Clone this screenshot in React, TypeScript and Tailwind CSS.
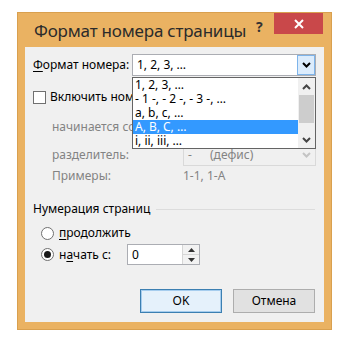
import React from "react";

const F = { fontFamily: '"Noto Sans", "Segoe UI", sans-serif' };

function Chevron({ color = "#000" }: { color?: string }) {
  return (
    <svg width="9" height="6" viewBox="0 0 9 6">
      <path d="M1 1 L4.5 4.5 L8 1" stroke={color} strokeWidth="2" fill="none" />
    </svg>
  );
}

function ChevronUp({ color = "#444" }: { color?: string }) {
  return (
    <svg width="9" height="6" viewBox="0 0 9 6">
      <path d="M1 5 L4.5 1.5 L8 5" stroke={color} strokeWidth="2" fill="none" />
    </svg>
  );
}

export default function App() {
  return (
    <div className="w-[346px] h-[344px] bg-white pt-[12px] pl-[17px] text-[12px] text-black" style={F}>
      <div className="w-[315px] h-[318px] bg-[#eab262] border border-[#d9a04f] flex flex-col">
        {/* title bar */}
        <div className="h-[34px] flex items-start relative">
          <div className="pl-[16px] pt-[7px] text-[17px] leading-[22px] text-[#2b2b2b] tracking-[-0.2px]">Формат номера страницы</div>
          <div className="absolute left-[238px] top-[3px] text-[14px] font-bold text-[#333]">?</div>
          <div className="absolute left-[256px] top-0 w-[49px] h-[21px] bg-[#c9484a] flex items-center justify-center">
            <svg width="10" height="10" viewBox="0 0 10 10">
              <path d="M1 1 L9 9 M9 1 L1 9" stroke="#fff" strokeWidth="2" />
            </svg>
          </div>
        </div>
        {/* client */}
        <div className="mx-[7px] h-[275px] bg-[#f0f0f0] relative flex flex-col px-[8px]">
          {/* row 1 */}
          <div className="mt-[7px] h-[22px] flex items-center">
            <div className="w-[99px]"><span className="underline underline-offset-2">Ф</span>ормат номера:</div>
            <div className="w-[184px] h-[22px] bg-white border border-[#abadb3] flex items-center">
              <div className="flex-1 pl-[4px]">1, 2, 3, …</div>
              <div className="w-[18px] h-[20px] bg-[#dcecfc] border border-[#7eb4ea] flex items-center justify-center">
                <Chevron />
              </div>
            </div>
          </div>
          {/* row 2 checkbox */}
          <div className="mt-[14px] h-[14px] flex items-center">
            <div className="w-[13px] h-[13px] bg-white border border-[#707070]" />
            <div className="ml-[4px] w-[82px] overflow-hidden whitespace-nowrap">Включить номер главы</div>
          </div>
          {/* row 3 */}
          <div className="mt-[12px] h-[22px] flex items-center text-[#838383]">
            <div className="pl-[19px] w-[99px] overflow-hidden whitespace-nowrap">начинается со стилем:</div>
            <div className="ml-[51px] w-[133px] h-[22px] border border-[#d9d9d9] bg-[#f0f0f0]" />
          </div>
          {/* row 4 separator */}
          <div className="mt-[6px] h-[22px] flex items-center text-[#838383]">
            <div className="pl-[19px] w-[150px]">разделитель:</div>
            <div className="w-[133px] h-[22px] border border-[#d9d9d9] bg-[#f0f0f0] flex items-center">
              <div className="flex-1 pl-[4px] flex"><span className="w-[22px]">-</span><span>(дефис)</span></div>
              <div className="w-[18px] h-[20px] flex items-center justify-center">
                <Chevron color="#c4c4c4" />
              </div>
            </div>
          </div>
          {/* row 5 */}
          <div className="mt-[2px] h-[16px] flex items-center text-[#838383]">
            <div className="pl-[19px] w-[150px]">Примеры:</div>
            <div>1-1, 1-A</div>
          </div>
          {/* row 6 group header */}
          <div className="mt-[17px] h-[16px] flex items-center">
            <div>Нумерация страниц</div>
            <div className="flex-1 ml-[6px] h-px bg-[#dcdcdc] mr-[1px]" />
          </div>
          {/* row 7 */}
          <div className="mt-[8px] h-[16px] flex items-center pl-[8px]">
            <div className="w-[13px] h-[13px] rounded-full bg-white border border-[#707070]" />
            <div className="ml-[5px]"><span className="underline underline-offset-2">п</span>родолжить</div>
          </div>
          {/* row 8 */}
          <div className="mt-[3px] h-[21px] flex items-center pl-[8px]">
            <div className="w-[13px] h-[13px] rounded-full bg-white border border-[#707070] flex items-center justify-center">
              <div className="w-[7px] h-[7px] rounded-full bg-[#1a1a1a]" />
            </div>
            <div className="ml-[5px] w-[68px]">н<span className="underline underline-offset-2">а</span>чать с:</div>
            <div className="w-[73px] h-[21px] bg-white border border-[#abadb3] flex items-center">
              <div className="flex-1 pl-[4px]">0</div>
              <div className="w-[17px] h-[19px] flex flex-col border-l border-[#d6d6d6]">
                <div className="flex-1 flex items-center justify-center bg-[#f2f2f2] border-b border-[#d6d6d6]">
                  <svg width="7" height="4" viewBox="0 0 7 4"><path d="M0 4 L3.5 0 L7 4Z" fill="#333" /></svg>
                </div>
                <div className="flex-1 flex items-center justify-center bg-[#f2f2f2]">
                  <svg width="7" height="4" viewBox="0 0 7 4"><path d="M0 0 L3.5 4 L7 0Z" fill="#333" /></svg>
                </div>
              </div>
            </div>
          </div>
          {/* buttons */}
          <div className="mt-[24px] flex justify-end gap-[11px] pr-[1px]">
            <div className="w-[82px] h-[24px] border border-[#3c7fb1] bg-[#e5f1fb] flex items-center justify-center shadow-[inset_0_0_0_1px_#a6cdee]">OK</div>
            <div className="w-[82px] h-[24px] border border-[#adadad] bg-[#e1e1e1] flex items-center justify-center">Отмена</div>
          </div>

          {/* dropdown list overlay */}
          <div className="absolute left-[107px] top-[30px] w-[184px] h-[72px] bg-white border border-[#646464] flex">
            <div className="flex-1 flex flex-col">
              <div className="h-[14px] leading-[14px] pl-[2px]">1, 2, 3, …</div>
              <div className="h-[14px] leading-[14px] pl-[2px]">- 1 -, - 2 -, - 3 -, …</div>
              <div className="h-[14px] leading-[14px] pl-[2px]">a, b, c, …</div>
              <div className="h-[14px] leading-[14px] pl-[2px] bg-[#3399ff] text-white">A, B, C, …</div>
              <div className="h-[14px] leading-[14px] pl-[2px]">i, ii, iii, …</div>
            </div>
            <div className="w-[17px] bg-[#f0f0f0] flex flex-col items-center">
              <div className="h-[17px] flex items-center justify-center"><ChevronUp /></div>
              <div className="w-[15px] h-[28px] bg-[#cdcdcd]" />
              <div className="flex-1" />
              <div className="h-[17px] flex items-center justify-center"><Chevron color="#444" /></div>
            </div>
          </div>
        </div>
      </div>
    </div>
  );
}
